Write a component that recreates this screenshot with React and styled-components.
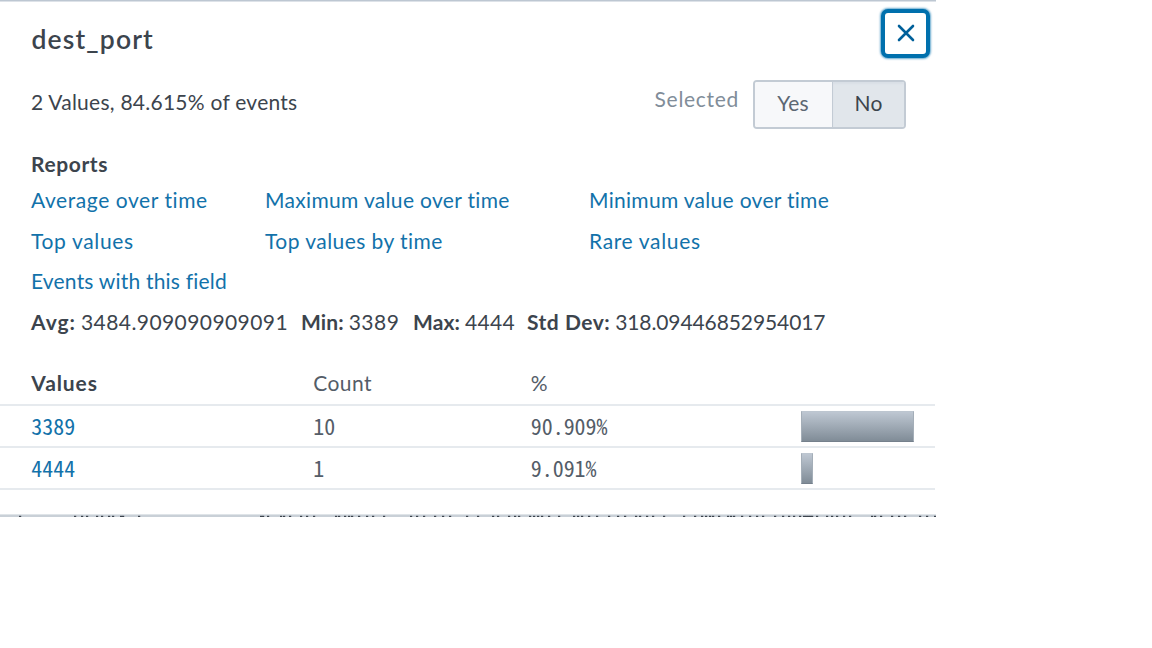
import React from "react";
import styled, { createGlobalStyle } from "styled-components";

const GlobalStyle = createGlobalStyle`
  * { box-sizing: border-box; }
  body { margin: 0; background: #fff; }
`;

const Panel = styled.section`
  width: 936px;
  height: 517px;
  display: flex;
  flex-direction: column;
  overflow: hidden;
  border-top: 1px solid #bdc7d2;
  box-shadow: inset 0 1px 0 #dde2e8;
  background: #fff;
  color: #3c444d;
  font-family: Lato, "Liberation Sans", sans-serif;
  font-size: 21px;
  line-height: 26px;
  white-space: nowrap;
`;

const Header = styled.header`
  display: flex;
  justify-content: space-between;
  height: 79px;
  padding: 8px 6px 0 31.5px;
`;

const Title = styled.h2`
  margin: 13px 0 0;
  font-size: 26.5px;
  line-height: 34px;
  font-weight: 600;
  letter-spacing: 1.15px;
`;

const CloseButton = styled.button`
  display: flex;
  align-items: center;
  justify-content: center;
  width: 49px;
  height: 49px;
  padding: 0 0 1px;
  border: 4px solid #0070ad;
  border-radius: 7px;
  background: #fff;
  color: #00609a;
  box-shadow: 0 0 2px 1px rgba(0, 112, 173, 0.6);
`;

const Summary = styled.div`
  display: flex;
  height: 71px;
  padding: 0 30px 0 31px;
`;

const SummaryText = styled.span`
  margin-top: 9px;
  letter-spacing: 0.25px;
`;

const SelectedLabel = styled.span`
  margin: 6px 14px 0 auto;
  color: #818d99;
  letter-spacing: 0.7px;
`;

const Toggle = styled.div`
  display: flex;
  width: 153px;
  height: 49px;
  border: 2px solid #c3cbd4;
  border-radius: 4px;
  overflow: hidden;
`;

const ToggleOption = styled.button`
  width: ${(p) => (p.$active ? "72px" : "78px")};
  flex: none;
  padding: 0 1px 3px 0;
  border: 0;
  border-right: ${(p) => (p.$active ? "0" : "1.5px solid #c3cbd4")};
  background: ${(p) => (p.$active ? "#e1e6eb" : "#f7f8fa")};
  box-shadow: ${(p) => (p.$active ? "inset 0 2px 2px #d9dfe6" : "none")};
  color: ${(p) => (p.$active ? "#3c444d" : "#5c6773")};
  font: inherit;
  letter-spacing: 0.2px;
`;

const SectionTitle = styled.h3`
  margin: 0 0 2.9px 31px;
  font-size: 21px;
  line-height: 26px;
  font-weight: 700;
  letter-spacing: 0.6px;
`;

const Reports = styled.nav`
  display: grid;
  grid-template-columns: 234px 324px auto;
  grid-auto-rows: 40.7px;
  padding-left: 31px;
  line-height: 40.7px;
`;

const ReportLink = styled.a`
  color: #1272aa;
  letter-spacing: ${(p) => p.$tracking}px;
`;

const Stats = styled.div`
  display: grid;
  grid-template-columns: 270px 112px 114px auto;
  height: 40.5px;
  padding-left: 31px;
  line-height: 39.4px;
`;

const Stat = styled.span`
  display: flex;
  gap: 5px;
  letter-spacing: ${(p) => p.$tracking}px;
`;

const StatLabel = styled.b`
  letter-spacing: ${(p) => p.$tracking}px;
`;

const Table = styled.div`
  margin-top: 27.1px;
  width: 935px;
`;

const Row = styled.div`
  display: grid;
  grid-template-columns: 282px 217.5px 270.5px 1fr;
  align-items: center;
  height: 42.2px;
  padding: 0 21px 0 31.3px;
  border-bottom: 2px solid #e6eaee;
  color: #545d68;
  font-family: "Noto Sans Mono CJK SC", monospace;
  font-size: 21.9px;
  line-height: 30px;
`;

const HeadRow = styled(Row)`
  align-items: start;
  height: 36.5px;
  font-family: inherit;
  font-size: 21px;
  line-height: 26px;
  letter-spacing: 0.4px;
`;

const SortedHeading = styled.b`
  color: #3c444d;
  letter-spacing: 0.9px;
`;

const Value = styled.span`
  color: #1272aa;
`;

const Bar = styled.span`
  height: 31px;
  width: ${(p) => p.$share * 1.24}px;
  border: 1px solid #808c98;
  border-color: #bdc6d0 #a4aeb8 #75808c;
  background: linear-gradient(#bec7d2, #808c97);
`;

const Footer = styled.div`
  display: flex;
  height: 3px;
  margin-top: auto;
  background: #c9d0d7;
  border-top: 1px solid #dfe4e8;
`;

const PEEK = [
  20, 75, 82, 87, 97, 102, 109, 113, 121, 123, 139, 261, 263, 268, 281, 284, 290, 301, 307, 314,
  336, 339, 345, 349, 352, 359, 367, 373, 384, 411, 417, 424, 435, 443, 450, 467, 478, 493, 498,
  509, 515, 519, 530, 534, 538, 542, 549, 559, 574, 578, 582, 589, 597, 609, 618, 625, 636, 640,
  647, 653, 664, 684, 695, 702, 706, 710, 713, 719, 728, 731, 734, 742, 750, 757, 763, 775, 783,
  789, 794, 800, 804, 806, 808, 810, 812, 817, 827, 832, 837, 844, 850, 872, 875, 881, 892, 899,
  905, 920, 927, 935,
];

const reports = [
  ["Average over time", 0.58],
  ["Maximum value over time", 0.33],
  ["Minimum value over time", 0.3],
  ["Top values", 0.65],
  ["Top values by time", 0.45],
  ["Rare values", 0.65],
  ["Events with this field", 0.2],
];

const stats = [
  ["Avg:", 1.0, "3484.909090909091", 0.42],
  ["Min:", 0.1, "3389", 0.5],
  ["Max:", 0.1, "4444", 0.3],
  ["Std Dev:", 0.5, "318.09446852954017", -0.1],
];

const rows = [
  ["3389", "10", 90.909],
  ["4444", "1", 9.091],
];

export default function App() {
  return (
    <>
      <GlobalStyle />
      <Panel>
        <Header>
          <Title>dest_port</Title>
          <CloseButton aria-label="Close">
            <svg width="18" height="18" viewBox="0 0 18 18" fill="none" stroke="currentColor" strokeWidth="2.6" strokeLinecap="round">
              <path d="M2 2l14 14M16 2L2 16" />
            </svg>
          </CloseButton>
        </Header>
        <Summary>
          <SummaryText>2 Values, 84.615% of events</SummaryText>
          <SelectedLabel>Selected</SelectedLabel>
          <Toggle>
            <ToggleOption>Yes</ToggleOption>
            <ToggleOption $active>No</ToggleOption>
          </Toggle>
        </Summary>
        <SectionTitle>Reports</SectionTitle>
        <Reports>
          {reports.map(([label, tracking]) => (
            <ReportLink key={label} $tracking={tracking}>{label}</ReportLink>
          ))}
        </Reports>
        <Stats>
          {stats.map(([label, labelTracking, value, tracking]) => (
            <Stat key={label} $tracking={tracking}>
              <StatLabel $tracking={labelTracking}>{label}</StatLabel>
              <span>{value}</span>
            </Stat>
          ))}
        </Stats>
        <Table>
          <HeadRow>
            <SortedHeading>Values</SortedHeading>
            <span>Count</span>
            <span>%</span>
          </HeadRow>
          {rows.map(([value, count, percent]) => (
            <Row key={value}>
              <Value>{value}</Value>
              <span>{count}</span>
              <span>{percent}%</span>
              <Bar $share={percent} />
            </Row>
          ))}
        </Table>
        <Footer>
          <svg width="936" height="2" fill="#3c444d">
            {PEEK.map((x) => (
              <rect key={x} x={x - 1} y="0.8" width="2.2" height="1.2" />
            ))}
          </svg>
        </Footer>
      </Panel>
    </>
  );
}
